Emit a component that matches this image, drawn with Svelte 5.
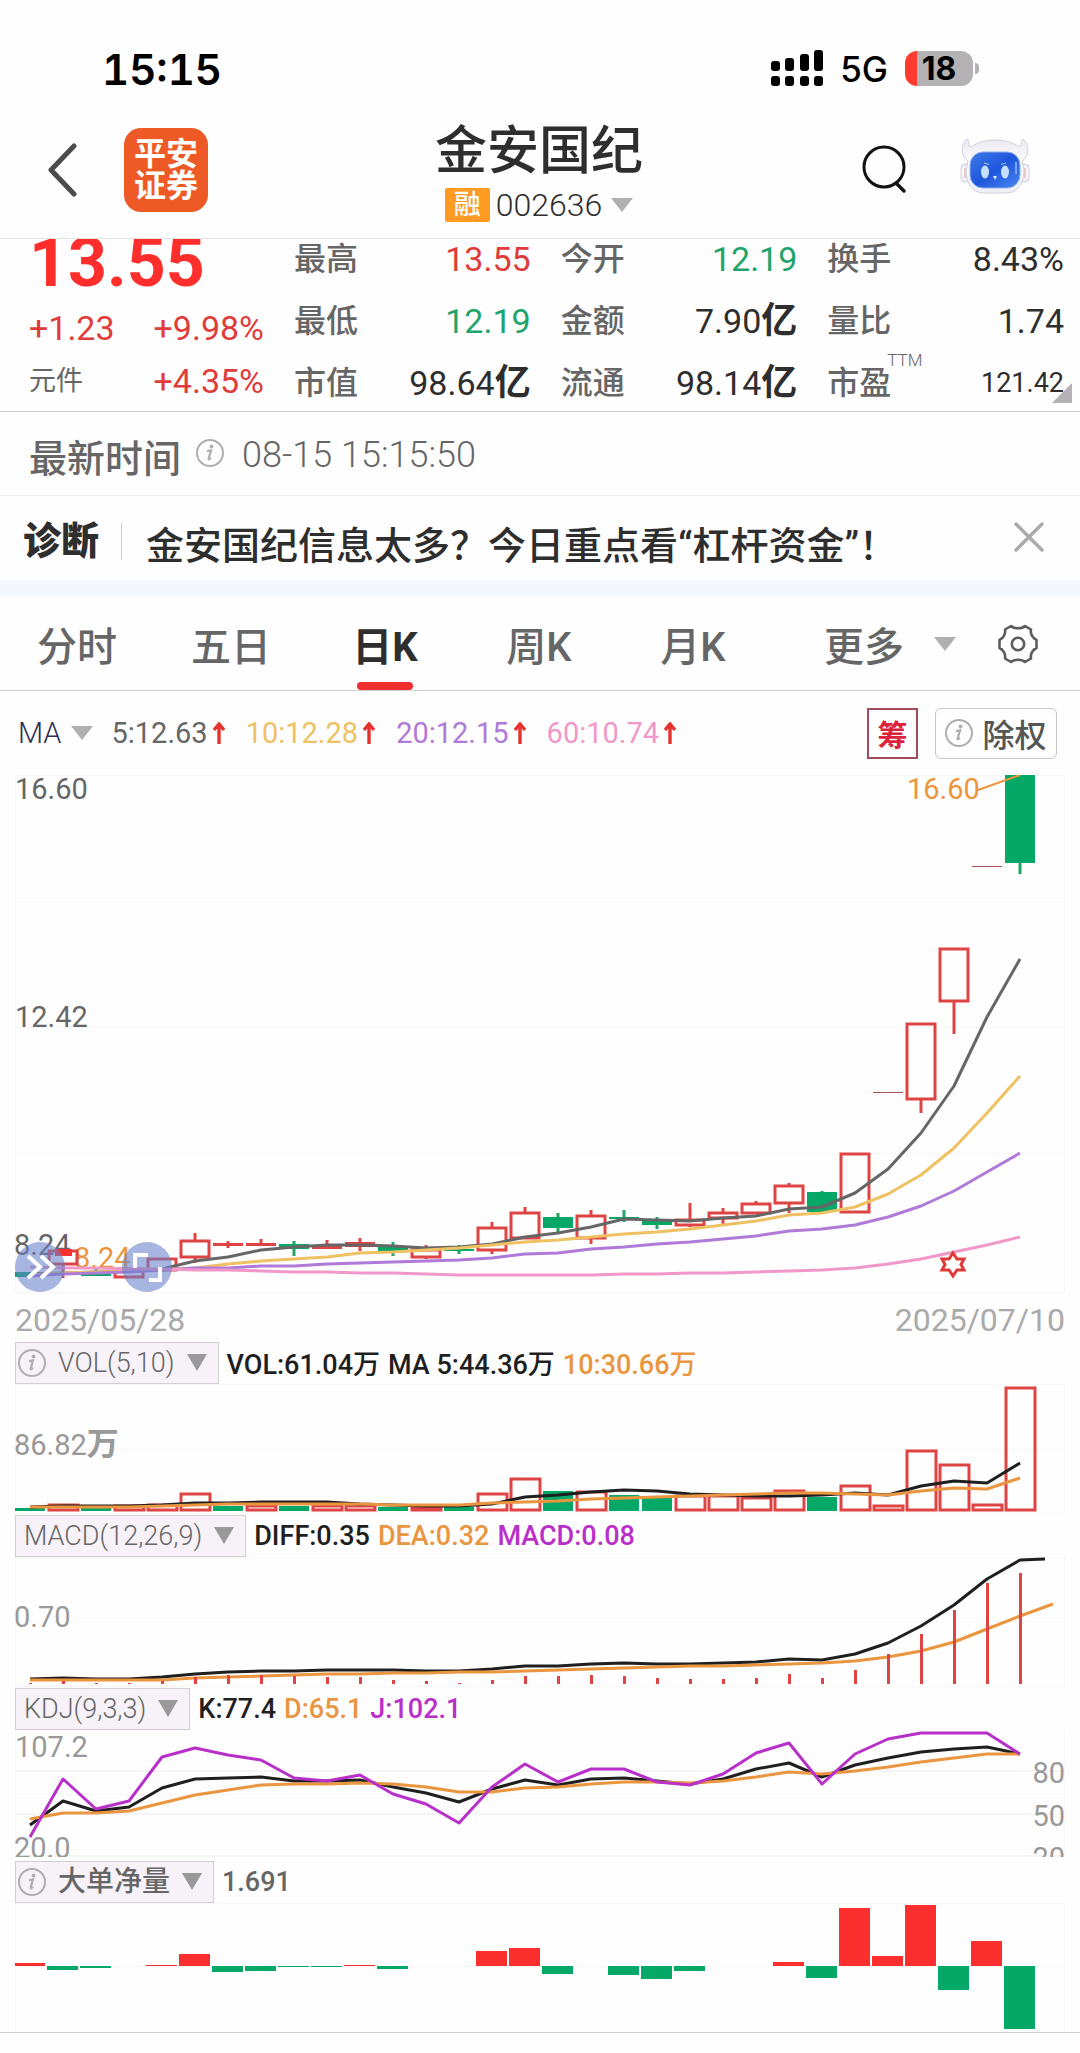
<script>
  const STEP = 33;
  const FIRST = 30;
  const cx = (i) => FIRST + STEP * i;
  const line = (values, start = 0) => values.map((y, i) => `${cx(i + start)},${y}`).join(' ');

  const stats = [
    { label: '最高', value: '13.55', tone: 'up' },
    { label: '今开', value: '12.19', tone: 'down' },
    { label: '换手', value: '8.43%' },
    { label: '最低', value: '12.19', tone: 'down' },
    { label: '金额', value: '7.90', unit: '亿' },
    { label: '量比', value: '1.74' },
    { label: '市值', value: '98.64', unit: '亿' },
    { label: '流通', value: '98.14', unit: '亿' },
    { label: '市盈', value: '121.42', sup: 'TTM', small: true }
  ];

  const tabs = ['分时', '五日', '日K', '周K', '月K'];
  let active = $state('日K');
  let showTip = $state(true);

  const averages = [
    { text: '5:12.63', cls: 'gray' },
    { text: '10:12.28', cls: 'yellow' },
    { text: '20:12.15', cls: 'purple' },
    { text: '60:10.74', cls: 'pink' }
  ];

  // kind, body top, body bottom, wick top, wick bottom
  const candles = [
    ['g', 1272, 1277, 1272, 1277], ['r', 1251, 1264, 1249, 1278], ['g', 1273, 1276, 1268, 1276],
    ['r', 1269, 1277, 1269, 1277], ['r', 1259, 1270, 1259, 1270], ['r', 1241, 1257, 1233, 1263],
    ['f', 1243, 1246, 1241, 1248], ['f', 1243, 1246, 1239, 1246], ['g', 1244, 1249, 1241, 1256],
    ['f', 1245, 1249, 1240, 1249], ['f', 1242, 1247, 1238, 1251], ['g', 1247, 1251, 1242, 1256],
    ['r', 1250, 1257, 1245, 1259], ['g', 1249, 1251, 1245, 1254], ['r', 1228, 1250, 1222, 1254],
    ['r', 1213, 1238, 1207, 1238], ['g', 1217, 1228, 1213, 1232], ['r', 1216, 1238, 1210, 1244],
    ['g', 1217, 1219, 1210, 1222], ['g', 1221, 1225, 1217, 1229], ['r', 1220, 1225, 1203, 1227],
    ['r', 1213, 1218, 1208, 1224], ['r', 1204, 1213, 1201, 1213], ['r', 1186, 1203, 1183, 1213],
    ['g', 1192, 1212, 1191, 1212], ['r', 1154, 1212, 1154, 1212], ['t', 1092, 1093, 1092, 1093],
    ['r', 1024, 1099, 1024, 1113], ['r', 949, 1001, 949, 1034], ['t', 866, 867, 866, 867],
    ['g', 775, 863, 775, 874]
  ];
  const ma5 = [1274, 1273, 1272, 1271, 1269, 1261, 1257, 1250, 1247, 1245, 1245, 1246, 1248, 1247, 1244, 1237, 1233, 1227, 1219, 1220, 1221, 1218, 1216, 1209, 1207, 1193, 1169, 1133, 1086, 1017, 959];
  const ma10 = [1275, 1273, 1272, 1271, 1270, 1268, 1264, 1261, 1259, 1257, 1253, 1252, 1250, 1248, 1245, 1242, 1240, 1237, 1234, 1232, 1229, 1225, 1221, 1215, 1213, 1207, 1194, 1175, 1148, 1113, 1076];
  const ma20 = [1276, 1274, 1273, 1272, 1270, 1268, 1268, 1266, 1266, 1264, 1263, 1262, 1261, 1260, 1258, 1254, 1253, 1249, 1247, 1244, 1242, 1239, 1236, 1231, 1229, 1225, 1217, 1206, 1191, 1172, 1153];
  const ma60 = [1267, 1268, 1268, 1269, 1269, 1270, 1270, 1271, 1272, 1272, 1273, 1273, 1274, 1275, 1275, 1275, 1275, 1275, 1274, 1274, 1273, 1273, 1272, 1271, 1270, 1268, 1264, 1259, 1252, 1245, 1237];

  const volumes = [
    ['g', 1508], ['r', 1505], ['g', 1507], ['r', 1506], ['r', 1505], ['r', 1494], ['g', 1506], ['r', 1506],
    ['g', 1506], ['r', 1506], ['r', 1506], ['g', 1507], ['r', 1507], ['g', 1507], ['r', 1494], ['r', 1479],
    ['g', 1491], ['r', 1492], ['g', 1495], ['g', 1497], ['r', 1496], ['r', 1496], ['r', 1498], ['r', 1491],
    ['g', 1497], ['r', 1486], ['r', 1506], ['r', 1451], ['r', 1465], ['r', 1505], ['r', 1388]
  ];
  const vol5 = [1507, 1506, 1506, 1506, 1505, 1503, 1503, 1502, 1502, 1502, 1504, 1505, 1506, 1506, 1504, 1497, 1495, 1492, 1490, 1491, 1494, 1495, 1496, 1496, 1495, 1493, 1495, 1486, 1481, 1483, 1463];
  const vol10 = [1507, 1507, 1507, 1507, 1506, 1505, 1504, 1504, 1504, 1504, 1504, 1505, 1505, 1505, 1503, 1502, 1501, 1499, 1498, 1497, 1496, 1495, 1494, 1493, 1493, 1494, 1495, 1491, 1488, 1489, 1478];

  const macd = [1683, 1681, 1683, 1683, 1681, 1677, 1675, 1675, 1676, 1677, 1677, 1680, 1681, 1683, 1680, 1676, 1676, 1675, 1676, 1678, 1679, 1679, 1678, 1674, 1678, 1670, 1654, 1634, 1610, 1583, 1573];
  const diff = [1679, 1678, 1679, 1679, 1677, 1674, 1672, 1671, 1671, 1670, 1670, 1670, 1671, 1671, 1669, 1666, 1666, 1664, 1663, 1664, 1664, 1663, 1662, 1659, 1660, 1654, 1643, 1626, 1605, 1579, 1560];
  const dea = [1680, 1680, 1680, 1680, 1680, 1678, 1677, 1676, 1675, 1674, 1674, 1673, 1673, 1672, 1672, 1671, 1670, 1669, 1668, 1667, 1666, 1666, 1665, 1664, 1663, 1661, 1657, 1651, 1642, 1629, 1616, 1604];

  const k = [1825, 1801, 1811, 1807, 1788, 1779, 1778, 1777, 1781, 1781, 1780, 1787, 1793, 1802, 1789, 1780, 1785, 1779, 1778, 1781, 1784, 1779, 1769, 1763, 1777, 1765, 1758, 1752, 1749, 1747, 1754];
  const d = [1819, 1813, 1813, 1811, 1803, 1795, 1790, 1785, 1784, 1784, 1783, 1784, 1787, 1792, 1792, 1788, 1787, 1784, 1782, 1782, 1783, 1781, 1777, 1772, 1774, 1771, 1767, 1762, 1758, 1754, 1754];
  const j = [1837, 1779, 1809, 1801, 1757, 1748, 1755, 1760, 1778, 1781, 1775, 1794, 1804, 1823, 1787, 1764, 1782, 1769, 1769, 1782, 1785, 1774, 1753, 1743, 1784, 1754, 1739, 1733, 1733, 1733, 1754];

  // signed bar heights of the net large-order flow
  const net = [3, -4, -2, 0, 1, 12, -6, -5, -1, -1, 1, -3, 0, 0, 15, 18, -8, 0, -9, -13, -5, 0, 0, 4, -12, 58, 10, 61, -24, 25, -63];
</script>

{#snippet info()}
  <svg class="info" viewBox="0 0 28 28" aria-hidden="true">
    <circle cx="14" cy="14" r="13" fill="none" stroke="currentColor" stroke-width="2" />
    <circle cx="15.5" cy="7.5" r="1.9" fill="currentColor" />
    <path d="M11 12.2l4-.8-2.4 8.3c-.2.9.5.8 2.4-.8" fill="none" stroke="currentColor" stroke-width="2.2" />
  </svg>
{/snippet}

{#snippet triangle()}
  <svg class="tri" viewBox="0 0 22 14" preserveAspectRatio="none" aria-hidden="true"><path d="M0 0H22L11 14Z" fill="currentColor" /></svg>
{/snippet}

{#snippet arrowUp()}
  <svg class="arrow" viewBox="0 0 14 22" aria-label="上升" role="img"><path d="M7 22V3M2 8L7 2L12 8" fill="none" stroke="#e5322d" stroke-width="3.4" /></svg>
{/snippet}

<main>
  <div class="status">
    <time>15:15</time>
    <div class="signals">
      <svg class="bars" viewBox="0 0 52 36" aria-hidden="true">
        <rect x="0" y="11" width="9" height="10" rx="3" /><rect x="14" y="8" width="9" height="13" rx="3" />
        <rect x="29" y="4" width="9" height="17" rx="3" /><rect x="43" y="0" width="9" height="21" rx="3" />
        <rect x="0" y="26" width="9" height="10" rx="3" /><rect x="14" y="26" width="9" height="10" rx="3" />
        <rect x="29" y="26" width="9" height="10" rx="3" /><rect x="43" y="26" width="9" height="10" rx="3" />
      </svg>
      <span class="net">5G</span>
      <span class="battery">18</span>
    </div>
  </div>

  <header>
    <button class="back" aria-label="返回">
      <svg viewBox="0 0 30 54"><path d="M26 3L3 27L26 51" fill="none" stroke="#4b4b4b" stroke-width="5" stroke-linecap="round" stroke-linejoin="round" /></svg>
    </button>
    <a class="logo" href="#home"><span>平安</span><span>证券</span></a>
    <div class="name">
      <h1>金安国纪</h1>
      <button class="code"><b>融</b>002636{@render triangle()}</button>
    </div>
    <button class="search" aria-label="搜索">
      <svg viewBox="0 0 46 50"><circle cx="22" cy="22" r="20" fill="none" stroke="#111" stroke-width="3" /><path d="M34 38L42 46" stroke="#111" stroke-width="3.4" stroke-linecap="round" /></svg>
    </button>
    <button class="robot" aria-label="智能助手">
      <svg viewBox="0 0 70 56">
        <defs>
          <linearGradient id="face" x1="0" y1="0" x2="1" y2="1"><stop offset="0" stop-color="#3f7be8" /><stop offset=".5" stop-color="#1f56dc" /><stop offset="1" stop-color="#4a86f0" /></linearGradient>
          <linearGradient id="shell" x1="0" y1="0" x2="0" y2="1"><stop offset="0" stop-color="#e9e9f0" /><stop offset=".4" stop-color="#fbfbfd" /><stop offset="1" stop-color="#eeeff6" /></linearGradient>
        </defs>
        <g fill="url(#shell)" stroke="#d2cfda" stroke-width="1">
          <rect x="1" y="26" width="9" height="18" rx="4" /><rect x="60" y="26" width="9" height="18" rx="4" />
          <path d="M8 23C1 19 0 7 7 1C8 1 9 3 9 8C10 10 14 7 18 5C29 1 41 1 52 5C56 7 60 10 61 8C61 3 62 1 63 1C70 7 69 19 62 23L64 32C64 45 58 55 46 55H24C12 55 6 45 6 32Z" />
        </g>
        <path d="M5 30V40M65 30V40" stroke="#eab9b4" stroke-width="1.4" />
        <rect x="10" y="14" width="50" height="36" rx="13" fill="url(#face)" stroke="#8daef0" stroke-width="1" />
        <ellipse cx="25" cy="34" rx="4" ry="6.5" fill="#c6e0fb" /><ellipse cx="45" cy="34" rx="4" ry="6.5" fill="#c6e0fb" />
        <path d="M24 25l5 1.500M46 25l-5 1.500" stroke="#9fc4f8" stroke-width="1.200" />
        <path d="M33 38h4l-2 4z" fill="#d7eafc" /><path d="M56 24v12" stroke="#8fb8f8" stroke-width="1.500" />
      </svg>
    </button>
  </header>

  <section class="quote">
    <div class="price">
      <strong>13.55</strong>
      <div><span>+1.23</span><span>+9.98%</span></div>
      <div><a href="#sector">元件</a><span>+4.35%</span></div>
    </div>
    <dl>
      {#each stats as s}
        <div>
          <dt>{s.label}{#if s.sup}<sup>{s.sup}</sup>{/if}</dt>
          <dd class={s.tone} class:small={s.small}>{s.value}{#if s.unit}<b>{s.unit}</b>{/if}</dd>
        </div>
      {/each}
    </dl>
    <i class="corner"></i>
  </section>

  <section class="latest">
    <span class="label">最新时间</span>
    {@render info()}
    <time>08-15 15:15:50</time>
  </section>

  {#if showTip}
    <section class="tip">
      <b>诊断</b>
      <a href="#diagnosis">金安国纪信息太多？今日重点看“杠杆资金”！</a>
      <button aria-label="关闭" onclick={() => (showTip = false)}>
        <svg viewBox="0 0 30 30"><path d="M2 2L28 28M28 2L2 28" stroke="#aaa" stroke-width="3.400" stroke-linecap="round" /></svg>
      </button>
    </section>
  {/if}

  <nav>
    <div class="tabs">
      {#each tabs as t}
        <button class:on={active === t} onclick={() => (active = t)}><span>{t}</span></button>
      {/each}
    </div>
    <button class="more">更多{@render triangle()}</button>
    <button class="gear" aria-label="设置">
      <svg viewBox="0 0 40 40" fill="none" stroke="#5c5c5c" stroke-width="2.600" stroke-linejoin="round">
        <path d="M13 2C16 5 24 5 27 2L33 5.500C32 10 35 14.500 38.500 16V24C35 25.500 32 30 33 34.500L27 38C24 35 16 35 13 38L7 34.500C8 30 5 25.500 1.500 24V16C5 14.500 8 10 7 5.500Z" />
        <circle cx="20" cy="20" r="6.200" />
      </svg>
    </button>
  </nav>

  <section class="ma">
    <label class="pick"><select aria-label="均线指标"><option>MA</option></select>{@render triangle()}</label>
    {#each averages as a}
      <span class={a.cls}>{a.text}{@render arrowUp()}</span>
    {/each}
    <button class="chips">筹</button>
    <button class="adjust">{@render info()}除权</button>
  </section>

  <div class="charts">
    <div class="stage">
      <svg viewBox="15 775 1050 518" role="img" aria-label="日K线图">
        <path class="grid" d="M15 775.500H1065M15 901.500H1065M15 1027.500H1065M15 1153.500H1065M15 1292.500H1065M15.500 775V1293M1064.500 775V1293" />
        <g class="axis dark"><text x="15" y="799">16.60</text><text x="15" y="1027">12.42</text><text x="14" y="1255">8.24</text></g>
        <text class="mark" x="74" y="1268">8.24</text>
        {#each candles as [kind, top, bottom, high, low], i}
          {#if kind === 'g'}
            <path class="gs" d="M{cx(i)} {high}V{low}" /><rect class="gf" x={cx(i) - 15} y={top} width="30" height={bottom - top} />
          {:else if kind === 'r'}
            <path class="rs" d="M{cx(i)} {high}V{top}M{cx(i)} {bottom}V{low}" /><rect class="rs" x={cx(i) - 14} y={top} width="28" height={bottom - top} />
          {:else if kind === 'f'}
            <path class="rs" d="M{cx(i)} {high}V{low}" /><rect class="rf" x={cx(i) - 15} y={top} width="30" height={bottom - top} />
          {:else}
            <rect class="thin" x={cx(i) - 15} y={top} width="30" height="1" />
          {/if}
        {/each}
        <rect class="nf" x="55" y="1249" width="17" height="7" />
        <polyline class="l gray" points={line(ma5)} />
        <polyline class="l yellow" points={line(ma10)} />
        <polyline class="l purple" points={line(ma20)} />
        <polyline class="l pink" points={line(ma60)} />
        <path d="M978 790L1020 775" stroke="#ec953c" stroke-width="2" />
        <text class="mark" x="907" y="799">16.60</text>
        <path class="star" d="M953 1253L957 1259H964L961 1264.500L964 1270H957L953 1276L949 1270H942L945 1264.500L942 1259H949Z" />
      </svg>
      <div class="float">
        <button aria-label="快进"><svg viewBox="0 0 50 50"><path d="M13 14L25 25L13 36M26 14L38 25L26 36" /></svg></button>
        <button aria-label="全屏"><svg viewBox="0 0 50 50"><path d="M13 26V13H26M27 38H38V25" /></svg></button>
      </div>
    </div>
    <div class="dates"><time>2025/05/28</time><time>2025/07/10</time></div>

    <div class="head">
      <label class="box">{@render info()}<select aria-label="成交量指标"><option>VOL(5,10)</option></select>{@render triangle()}</label>
      <span>VOL:61.04万</span><span>MA 5:44.36万</span><span class="orange">10:30.66万</span>
    </div>
    <svg viewBox="15 1384 1050 130" role="img" aria-label="成交量">
      <path class="grid" d="M15 1384.500H1065M15 1449.500H1065M15 1513.500H1065M15.500 1384V1514M1064.500 1384V1514" />
      <text class="axis" x="14" y="1455">86.82<tspan class="unit">万</tspan></text>
      {#each volumes as [kind, top], i}
        {#if kind === 'g'}
          <rect class="gf" x={cx(i) - 15} y={top} width="30" height={1511 - top} />
        {:else}
          <rect class="vs" x={cx(i) - 14} y={top} width="29" height={1510 - top} />
        {/if}
      {/each}
      <polyline class="l black" points={line(vol5)} />
      <polyline class="l orange" points={line(vol10)} />
    </svg>

    <div class="head">
      <label class="box wide"><select aria-label="MACD指标"><option>MACD(12,26,9)</option></select>{@render triangle()}</label>
      <span>DIFF:0.35</span><span class="orange">DEA:0.32</span><span class="violet">MACD:0.08</span>
    </div>
    <svg viewBox="15 1557 1050 130" role="img" aria-label="MACD">
      <path class="grid" d="M15 1557.500H1065M15 1621.500H1065M15 1686.500H1065M15.500 1557V1687M1064.500 1557V1687" />
      <text class="axis" x="14" y="1627">0.70</text>
      <polyline class="l black" points="{line(diff)} 1045,1559" />
      <polyline class="l orange" points={line(dea)} />
      {#each macd as top, i}
        <rect class="mf" x={cx(i) - 1} y={top} width="3" height={1684 - top} />
      {/each}
    </svg>

    <div class="head">
      <label class="box wide"><select aria-label="KDJ指标"><option>KDJ(9,3,3)</option></select>{@render triangle()}</label>
      <span>K:77.4</span><span class="orange">D:65.1</span><span class="violet">J:102.1</span>
    </div>
    <svg viewBox="15 1730 1050 127" role="img" aria-label="KDJ">
      <path class="grid" d="M15 1794.500H1065M15.500 1730V1857M1064.500 1730V1857" />
      <path class="grid strong" d="M15 1771H1065M15 1814H1065M15 1856H1065" />
      <g class="axis"><text x="15" y="1757">107.2</text><text x="14" y="1858">20.0</text></g>
      <g class="axis" text-anchor="end"><text x="1065" y="1783">80</text><text x="1065" y="1826">50</text><text x="1065" y="1868">20</text></g>
      <polyline class="l black" points={line(k)} />
      <polyline class="l orange" points={line(d)} />
      <polyline class="l violet" points={line(j)} />
    </svg>

    <div class="head last">
      <label class="box">{@render info()}<select class="cn" aria-label="资金指标"><option>大单净量</option></select>{@render triangle()}</label>
      <span class="gray">1.691</span>
    </div>
    <svg viewBox="15 1903 1050 129" role="img" aria-label="大单净量">
      <path class="grid" d="M15 1903.500H1065M15 1966.500H1065M15.500 1903V2032M1064.500 1903V2032" />
      {#each net as v, i}
        <rect class={v > 0 ? 'nf' : 'gf'} x={cx(i) - 16} y={v > 0 ? 1966 - v : 1966} width="31" height={Math.abs(v)} />
      {/each}
    </svg>
  </div>
</main>

<style>
  :global(body) { margin: 0; background: #fefefe; }
  main { font-family: Roboto, "Noto Sans CJK SC", sans-serif; color: #2e2e2e; }
  button, select { font: inherit; color: inherit; background: none; border: 0; padding: 0; margin: 0; }
  a { color: inherit; text-decoration: none; }
  svg { display: block; }
  .tri { width: 22px; height: 14px; color: #b0b0b0; }
  .info { width: 28px; height: 28px; color: #b0aeb2; flex: none; }

  .status { display: flex; justify-content: space-between; align-items: center; height: 60px; padding: 38px 107px 8px 102px; font-family: Inter, sans-serif; color: #000; }
  .status time { font-size: 42px; font-weight: 600; font-variant-numeric: tabular-nums; padding-top: 2px; }
  .signals { display: flex; align-items: center; }
  .bars { width: 52px; height: 36px; }
  .net { font-size: 35px; font-weight: 500; margin: 2px 17px 0 17px; }
  .battery { position: relative; width: 68px; height: 35px; border-radius: 12px; background: linear-gradient(90deg, #ff3b30 12px, #b5b2b5 12px); font-size: 32px; line-height: 35px; font-weight: 700; text-align: center; }
  .battery::after { content: ""; position: absolute; right: -6px; top: 12px; width: 4px; height: 11px; border-radius: 0 4px 4px 0; background: #b5b2b5; }

  header { display: flex; align-items: center; height: 128px; padding: 0 50px 4px 48px; border-bottom: 1px solid #e4e4e4; }
  .back { width: 76px; }
  .back svg { width: 30px; height: 54px; }
  .logo { display: flex; flex-direction: column; justify-content: center; width: 84px; height: 84px; border-radius: 17px; background: #ee5a26; color: #fff; font-size: 32px; line-height: 32px; font-weight: 700; text-align: center; margin-right: 144px; }
  .name { flex: 1; text-align: center; padding-top: 4px; }
  h1 { margin: 0; font-size: 52px; line-height: 62px; font-weight: 500; }
  .code { display: inline-flex; align-items: center; font-size: 32px; line-height: 36px; font-weight: 300; margin-top: 4px; }
  .code b { width: 45px; height: 34px; margin-right: 6px; background: #ff9a23; color: #fff; border-radius: 2px; font-size: 27px; line-height: 34px; font-weight: 500; }
  .code :global(.tri) { margin-left: 9px; }
  .search { margin: 0 52px 0 136px; }
  .search svg { width: 46px; height: 50px; }
  .robot { margin-top: -8px; }
  .robot svg { width: 70px; height: 56px; }

  .quote { position: relative; box-sizing: border-box; display: grid; grid-template-columns: 235px 1fr; column-gap: 30px; height: 173px; padding: 2px 16px 0 29px; overflow: hidden; border-bottom: 1px solid #cfcfcf; font-size: 34px; line-height: 36px; }
  .price strong { display: block; font-size: 68px; line-height: 44px; font-weight: 700; color: #fd2e2c; margin-bottom: 25px; }
  .price div { display: flex; justify-content: space-between; color: #df3c3b; margin-bottom: 17px; }
  .price a { font-size: 27px; color: #666; }
  dl { display: grid; grid-template-columns: repeat(3, 1fr); gap: 26px 30px; margin: 0; align-content: start; }
  dl div { display: flex; justify-content: space-between; white-space: nowrap; height: 36px; }
  dt { position: relative; font-size: 32px; font-weight: 500; color: #666; }
  sup { position: absolute; left: 60px; top: -23px; font-size: 17px; font-weight: 300; }
  dd { margin: 0; }
  dd.up { color: #df3c3b; }
  dd.down { color: #1fa56c; }
  dd.small { font-size: 27px; }
  dd b { font-size: 36px; }
  .corner { position: absolute; right: 8px; bottom: 8px; border-left: 20px solid transparent; border-bottom: 20px solid #b5b2b5; }

  .latest { display: flex; align-items: center; box-sizing: border-box; height: 84px; padding: 3px 29px 0; border-bottom: 1px solid #ececec; font-size: 36px; color: #666; }
  .latest .label { font-size: 38px; font-weight: 500; }
  .latest :global(.info) { margin: 0 18px 4px 15px; }
  .latest time { font-weight: 300; }

  .tip { display: flex; align-items: center; box-sizing: border-box; height: 101px; padding: 6px 36px 0 23px; border-bottom: 17px solid #f5f7fe; font-size: 38px; }
  .tip b { padding-right: 22px; margin-right: 24px; border-right: 1px solid #ccc; line-height: 37px; font-weight: 900; }
  .tip a { flex: 1; font-weight: 500; padding-top: 2px; }
  .tip svg { width: 30px; height: 30px; margin-bottom: 8px; }

  nav { display: flex; align-items: center; height: 93px; padding: 0 42px 0 0; border-bottom: 1px solid #d0d0d0; font-size: 40px; font-weight: 500; color: #666; }
  .tabs { flex: 1; display: grid; grid-template-columns: repeat(5, 1fr); height: 93px; margin-right: 54px; }
  .tabs button { position: relative; }
  .tabs .on { color: #2e2e2e; font-weight: 700; }
  .tabs .on::after { content: ""; position: absolute; left: 50%; bottom: 0; width: 56px; height: 8px; margin-left: -28px; border-radius: 4px; background: #ee2f2e; }
  .more { display: flex; align-items: center; gap: 30px; }
  .gear { margin-left: 42px; }
  .gear svg { width: 40px; height: 40px; }

  .ma { display: flex; align-items: center; height: 84px; padding: 0 23px 0 18px; font-size: 29px; color: #2f2f56; }
  .ma > span { display: flex; align-items: center; margin-right: 20px; }
  .pick { display: flex; align-items: center; gap: 10px; margin-right: 18px; font-weight: 300; }
  select { appearance: none; field-sizing: content; }
  .arrow { width: 14px; height: 22px; margin-left: 4px; }
  .chips { width: 51px; height: 51px; margin-left: auto; border: 2px solid #a34a5c; color: #dd233c; font-size: 30px; font-weight: 700; }
  .adjust { display: flex; align-items: center; justify-content: center; gap: 9px; width: 122px; height: 51px; margin-left: 17px; border: 1px solid #c6c6c6; border-radius: 6px; color: #555; font-size: 32px; font-weight: 500; white-space: nowrap; }
  span.gray { color: #666; }
  span.yellow { color: #efc163; }
  span.purple { color: #b07ad8; }
  span.pink { color: #f198c8; }
  span.orange { color: #ea953f; }
  span.violet { color: #b92fc9; }

  .charts { padding: 0 15px; border-bottom: 1px solid #cfcfcf; }
  .charts > svg, .stage > svg { width: 100%; height: auto; overflow: hidden; }
  .stage { position: relative; }
  .float { position: absolute; left: 0; bottom: 1px; display: flex; gap: 57px; }
  .float button { width: 50px; height: 50px; border-radius: 50%; background: rgba(104, 130, 204, 0.58); }
  .float path { fill: none; stroke: #fff; stroke-width: 4; }
  .dates { display: flex; justify-content: space-between; height: 48px; line-height: 54px; font-size: 32px; color: #aaa; }
  .head { display: flex; align-items: center; gap: 8px; height: 43px; font-size: 27px; font-weight: 500; color: #1f1f1f; }
  .head.last { margin-top: 3px; }
  .box { display: flex; align-items: center; gap: 12px; height: 40px; padding: 0 11px 0 2px; border: 1px solid #d3ced4; background: #f6f2f8; color: #666; font-weight: 300; }
  .box.wide { padding-left: 8px; }
  .box :global(.tri) { width: 20px; height: 17px; color: #999; }
  .cn { font-weight: 500; font-size: 28px; }

  .grid { fill: none; stroke: #f8f6f7; stroke-width: 1; }
  .strong { stroke: #f5f5f5; stroke-width: 2; }
  .axis { font-size: 29px; fill: #999; }
  .axis.dark { fill: #666; }
  .unit { font-size: 32px; font-weight: 700; }
  .mark { font-size: 29px; fill: #ec953c; }
  .gf { fill: #05a866; }
  .gs { stroke: #1fa564; stroke-width: 3; }
  .rs, .vs { fill: none; stroke: #dd4443; stroke-width: 3; }
  .rf, .mf { fill: #dd4443; }
  .nf { fill: #fb2f2d; }
  .thin { fill: #a5544f; }
  .l { fill: none; stroke-width: 3; stroke-linejoin: round; }
  .l.gray { stroke: #666; }
  .l.yellow { stroke: #efc163; }
  .l.purple { stroke: #b07ad8; }
  .l.pink { stroke: #f198c8; }
  .l.black { stroke: #1f1f1f; }
  .l.orange { stroke: #ea953f; }
  .l.violet { stroke: #b92fc9; }
  .star { fill: #fff; stroke: #e03a38; stroke-width: 3; }
</style>
